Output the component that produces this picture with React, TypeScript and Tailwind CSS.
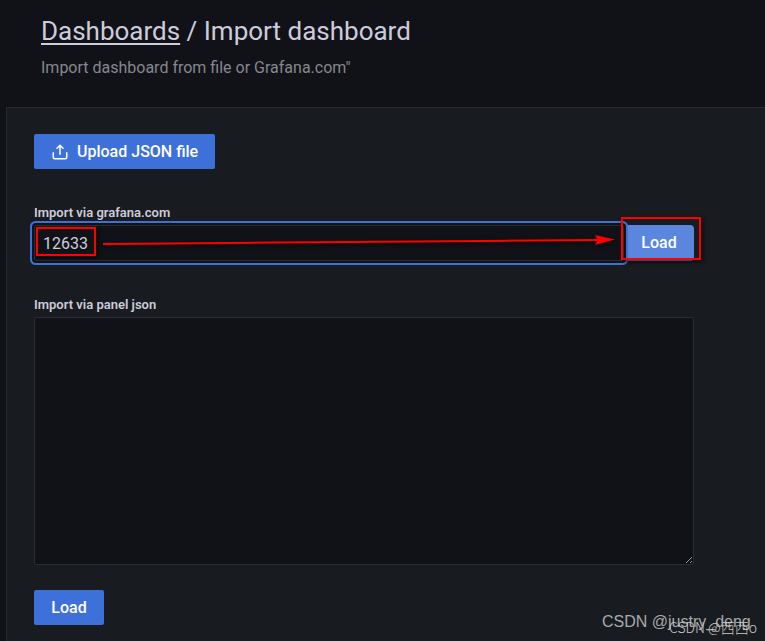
import React from "react";

function UploadIcon() {
  return (
    <svg width="18" height="18" viewBox="0 0 24 24" fill="currentColor" aria-hidden="true">
      <path d="M8.71,7.71,11,5.41V15a1,1,0,0,0,2,0V5.41l2.29,2.3a1,1,0,0,0,1.42,0,1,1,0,0,0,0-1.42l-4-4a1,1,0,0,0-.33-.21,1,1,0,0,0-.76,0,1,1,0,0,0-.33.21l-4,4A1,1,0,1,0,8.71,7.71ZM21,12a1,1,0,0,0-1,1v6a1,1,0,0,1-1,1H5a1,1,0,0,1-1-1V13a1,1,0,0,0-2,0v6a3,3,0,0,0,3,3H19a3,3,0,0,0,3-3V13A1,1,0,0,0,21,12Z" />
    </svg>
  );
}

function Header() {
  return (
    <header className="px-[41px] pt-3 pb-[29px]">
      <h1 className="text-[26px] leading-[38px] font-normal">
        <a href="#dashboards" className="underline decoration-2 underline-offset-3">Dashboards</a> / Import dashboard
      </h1>
      <p className="mt-2 text-[16px] leading-5 text-[#86878f]">
        Import dashboard from file or Grafana.com"
      </p>
    </header>
  );
}

function ArrowMark() {
  return (
    <svg className="pointer-events-none absolute top-2 left-[69px] h-[22px] w-[513px] drop-shadow-[2px_2px_2px_rgba(0,0,0,0.6)]" viewBox="0 0 513 22" aria-hidden="true">
      <path d="M0 11 L496 7" stroke="#fe0000" strokeWidth="2" />
      <path d="M492 2 L512 6.5 L492 12 L495 7 Z" fill="#fe0000" />
    </svg>
  );
}

function GrafanaComField() {
  return (
    <div>
      <label htmlFor="gcom" className="block text-[13px] leading-4 font-semibold">Import via grafana.com</label>
      <div className="relative mt-1 flex">
        <input
          id="gcom"
          type="text"
          defaultValue="12633"
          className="relative z-10 h-9 min-w-0 flex-1 rounded-xs border border-[#2c2d33] bg-[#111217] px-2 text-[16px] shadow-[0_0_0_2px_#111217,0_0_0_4px_#3d71d9] outline-none"
        />
        <button type="submit" className="h-9 w-[70px] rounded-r-sm bg-[#5a86de] text-[16px] font-medium text-white">
          Load
        </button>
        <div className="pointer-events-none absolute top-[2px] left-[2px] z-20 h-[29px] w-[60px] border-2 border-[#fe0000] shadow-[2px_2px_4px_rgba(0,0,0,0.6)]" />
        <div className="pointer-events-none absolute -top-2 -right-[7px] z-20 h-[43px] w-20 border-2 border-[#fe0000] shadow-[2px_2px_4px_rgba(0,0,0,0.6)]" />
        <div className="pointer-events-none absolute inset-0 z-20">
          <ArrowMark />
        </div>
      </div>
    </div>
  );
}

function Watermarks() {
  return (
    <div className="pointer-events-none absolute right-0 bottom-0 h-10 w-[164px] overflow-hidden whitespace-nowrap">
      <span className="absolute top-[9px] left-px font-['Liberation_Sans',sans-serif] text-[16px] leading-6 text-[#a9aaac]">CSDN @justry_deng</span>
      <span className="absolute right-2 bottom-1 font-['Noto_Sans_CJK_SC',sans-serif] text-[14px] leading-5 font-light text-[#c9cacc]">CSDN @西西o</span>
    </div>
  );
}

export default function App() {
  return (
    <div className="relative flex min-h-screen flex-col bg-[#111217] font-[Roboto,sans-serif] text-[#ccccdc]">
      <Header />
      <main className="ml-[6px] flex-1 border-t border-l border-[#25282d] bg-[#181b1f] pt-[26px] pr-6 pb-4 pl-[27px]">
        <button type="button" className="flex h-[35px] items-center gap-2 rounded-xs bg-[#3d71d9] px-[17px] text-[16px] font-medium text-white">
          <UploadIcon />
          Upload JSON file
        </button>
        <form className="mt-9 max-w-[660px]" onSubmit={(e) => e.preventDefault()}>
          <GrafanaComField />
          <label htmlFor="json" className="mt-9 block text-[13px] leading-4 font-semibold">Import via panel json</label>
          <textarea id="json" className="mt-1 block h-[248px] w-full rounded-xs border border-[#2c2d33] bg-[#111217] p-2 text-[16px] outline-none" />
          <button type="submit" className="mt-[25px] h-[35px] w-[70px] rounded-xs bg-[#3d71d9] text-[16px] font-medium text-white">
            Load
          </button>
        </form>
      </main>
      <Watermarks />
    </div>
  );
}
